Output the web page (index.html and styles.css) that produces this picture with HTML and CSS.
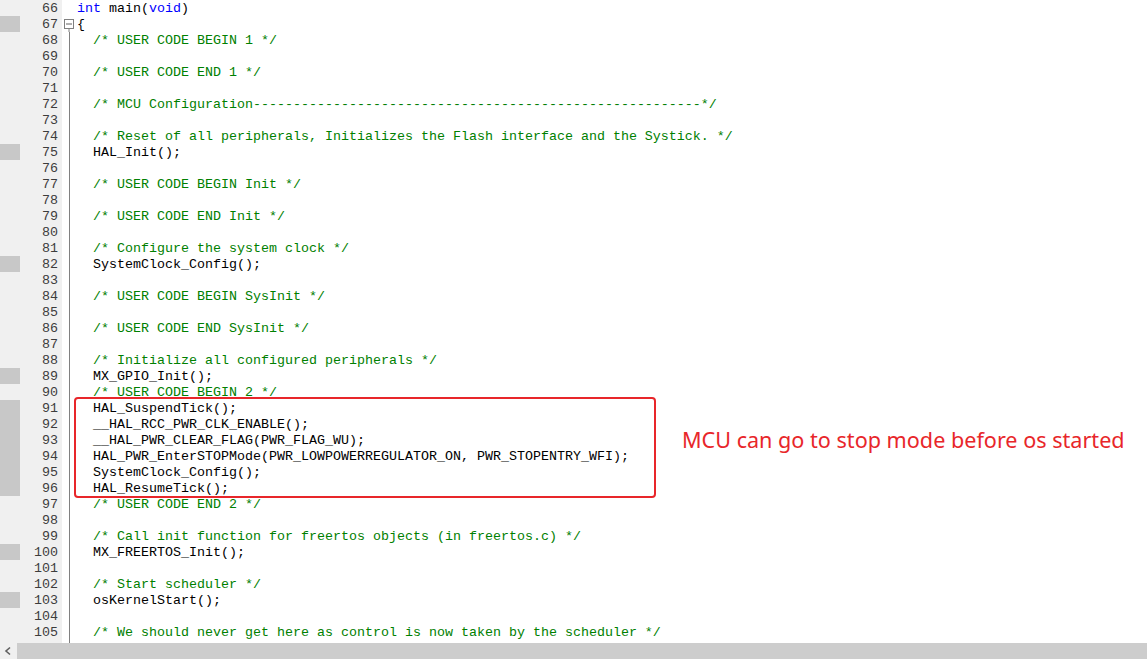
FILE: index.html
```html
<!DOCTYPE html>
<html>
<head>
<meta charset="utf-8">
<link rel="stylesheet" href="styles.css">
</head>
<body>
<div class="window">
  <div class="editor">
    <div class="line"><span class="mark"></span><span class="num">66</span><span class="fold"></span><span class="code"><span class="kw">int</span> main(<span class="kw">void</span>)</span></div>
    <div class="line"><span class="mark on"></span><span class="num">67</span><span class="fold box"><svg width="13" height="16" viewBox="0 0 13 16"><rect x="2.5" y="3.5" width="9" height="9" fill="#fff" stroke="#808080"/><line x1="4" y1="8" x2="10" y2="8" stroke="#606060"/><line x1="7" y1="13" x2="7" y2="16" stroke="#808080"/></svg></span><span class="code">{</span></div>
    <div class="line"><span class="mark"></span><span class="num">68</span><span class="fold vl"></span><span class="code">  <span class="cm">/* USER CODE BEGIN 1 */</span></span></div>
    <div class="line"><span class="mark"></span><span class="num">69</span><span class="fold vl"></span><span class="code"></span></div>
    <div class="line"><span class="mark"></span><span class="num">70</span><span class="fold vl"></span><span class="code">  <span class="cm">/* USER CODE END 1 */</span></span></div>
    <div class="line"><span class="mark"></span><span class="num">71</span><span class="fold vl"></span><span class="code"></span></div>
    <div class="line"><span class="mark"></span><span class="num">72</span><span class="fold vl"></span><span class="code">  <span class="cm">/* MCU Configuration--------------------------------------------------------*/</span></span></div>
    <div class="line"><span class="mark"></span><span class="num">73</span><span class="fold vl"></span><span class="code"></span></div>
    <div class="line"><span class="mark"></span><span class="num">74</span><span class="fold vl"></span><span class="code">  <span class="cm">/* Reset of all peripherals, Initializes the Flash interface and the Systick. */</span></span></div>
    <div class="line"><span class="mark on"></span><span class="num">75</span><span class="fold vl"></span><span class="code">  HAL_Init();</span></div>
    <div class="line"><span class="mark"></span><span class="num">76</span><span class="fold vl"></span><span class="code"></span></div>
    <div class="line"><span class="mark"></span><span class="num">77</span><span class="fold vl"></span><span class="code">  <span class="cm">/* USER CODE BEGIN Init */</span></span></div>
    <div class="line"><span class="mark"></span><span class="num">78</span><span class="fold vl"></span><span class="code"></span></div>
    <div class="line"><span class="mark"></span><span class="num">79</span><span class="fold vl"></span><span class="code">  <span class="cm">/* USER CODE END Init */</span></span></div>
    <div class="line"><span class="mark"></span><span class="num">80</span><span class="fold vl"></span><span class="code"></span></div>
    <div class="line"><span class="mark"></span><span class="num">81</span><span class="fold vl"></span><span class="code">  <span class="cm">/* Configure the system clock */</span></span></div>
    <div class="line"><span class="mark on"></span><span class="num">82</span><span class="fold vl"></span><span class="code">  SystemClock_Config();</span></div>
    <div class="line"><span class="mark"></span><span class="num">83</span><span class="fold vl"></span><span class="code"></span></div>
    <div class="line"><span class="mark"></span><span class="num">84</span><span class="fold vl"></span><span class="code">  <span class="cm">/* USER CODE BEGIN SysInit */</span></span></div>
    <div class="line"><span class="mark"></span><span class="num">85</span><span class="fold vl"></span><span class="code"></span></div>
    <div class="line"><span class="mark"></span><span class="num">86</span><span class="fold vl"></span><span class="code">  <span class="cm">/* USER CODE END SysInit */</span></span></div>
    <div class="line"><span class="mark"></span><span class="num">87</span><span class="fold vl"></span><span class="code"></span></div>
    <div class="line"><span class="mark"></span><span class="num">88</span><span class="fold vl"></span><span class="code">  <span class="cm">/* Initialize all configured peripherals */</span></span></div>
    <div class="line"><span class="mark on"></span><span class="num">89</span><span class="fold vl"></span><span class="code">  MX_GPIO_Init();</span></div>
    <div class="line"><span class="mark"></span><span class="num">90</span><span class="fold vl"></span><span class="code">  <span class="cm">/* USER CODE BEGIN 2 */</span></span></div>
    <div class="line"><span class="mark on"></span><span class="num">91</span><span class="fold vl"></span><span class="code">  HAL_SuspendTick();</span></div>
    <div class="line"><span class="mark on"></span><span class="num">92</span><span class="fold vl"></span><span class="code">  __HAL_RCC_PWR_CLK_ENABLE();</span></div>
    <div class="line"><span class="mark on"></span><span class="num">93</span><span class="fold vl"></span><span class="code">  __HAL_PWR_CLEAR_FLAG(PWR_FLAG_WU);</span></div>
    <div class="line"><span class="mark on"></span><span class="num">94</span><span class="fold vl"></span><span class="code">  HAL_PWR_EnterSTOPMode(PWR_LOWPOWERREGULATOR_ON, PWR_STOPENTRY_WFI);</span></div>
    <div class="line"><span class="mark on"></span><span class="num">95</span><span class="fold vl"></span><span class="code">  SystemClock_Config();</span></div>
    <div class="line"><span class="mark on"></span><span class="num">96</span><span class="fold vl"></span><span class="code">  HAL_ResumeTick();</span></div>
    <div class="line"><span class="mark"></span><span class="num">97</span><span class="fold vl"></span><span class="code">  <span class="cm">/* USER CODE END 2 */</span></span></div>
    <div class="line"><span class="mark"></span><span class="num">98</span><span class="fold vl"></span><span class="code"></span></div>
    <div class="line"><span class="mark"></span><span class="num">99</span><span class="fold vl"></span><span class="code">  <span class="cm">/* Call init function for freertos objects (in freertos.c) */</span></span></div>
    <div class="line"><span class="mark on"></span><span class="num">100</span><span class="fold vl"></span><span class="code">  MX_FREERTOS_Init();</span></div>
    <div class="line"><span class="mark"></span><span class="num">101</span><span class="fold vl"></span><span class="code"></span></div>
    <div class="line"><span class="mark"></span><span class="num">102</span><span class="fold vl"></span><span class="code">  <span class="cm">/* Start scheduler */</span></span></div>
    <div class="line"><span class="mark on"></span><span class="num">103</span><span class="fold vl"></span><span class="code">  osKernelStart();</span></div>
    <div class="line"><span class="mark"></span><span class="num">104</span><span class="fold vl"></span><span class="code"></span></div>
    <div class="line"><span class="mark"></span><span class="num">105</span><span class="fold vl"></span><span class="code">  <span class="cm">/* We should never get here as control is now taken by the scheduler */</span></span></div>
    <div class="line tail"><span class="mark"></span><span class="num"></span><span class="fold vl"></span><span class="code"></span></div>
    <div class="callout"></div>
    <div class="note">MCU can go to stop mode before os started</div>
  </div>
  <div class="hscroll">
    <span class="arrow"><svg width="16" height="16" viewBox="0 0 16 16"><polyline points="10,4.5 6,8 10,11.5" fill="none" stroke="#606060" stroke-width="1.6"/></svg></span>
    <div class="thumb"></div>
  </div>
</div>
</body>
</html>
```
FILE: styles.css
```css
html, body {
  margin: 0;
  padding: 0;
  background: #ffffff;
}
.window {
  width: 1147px;
  height: 660px;
  overflow: hidden;
  display: flex;
  flex-direction: column;
  background: #ffffff;
}
.editor {
  position: relative;
  height: 643px;
  overflow: hidden;
  font-family: "Liberation Mono", "Courier New", monospace;
  font-size: 13.33px;
  line-height: 16px;
  color: #000000;
}
.line {
  display: grid;
  grid-template-columns: 20px 42px 15px 1fr;
  grid-template-rows: 16px;
  height: 16px;
}
.line.tail {
  height: 3px;
  grid-template-rows: 3px;
}
.mark {
  background: #f0f0f0;
}
.mark.on {
  background: #c8c8c8;
}
.num {
  background: #f0f0f0;
  text-align: right;
  padding-right: 4px;
  padding-top: 1px;
  color: #3c3c3c;
}
.fold {
  display: block;
}
.fold svg {
  display: block;
}
.fold.vl {
  background: linear-gradient(to right, transparent 7px, #808080 7px, #808080 8px, transparent 8px);
}
.code {
  white-space: pre;
  padding-top: 1px;
}
.kw {
  color: #0000ff;
}
.cm {
  color: #008000;
}
.callout {
  position: absolute;
  left: 74px;
  top: 397px;
  width: 578px;
  height: 97px;
  border: 2px solid #e8262a;
  border-radius: 4px;
}
.note {
  position: absolute;
  left: 682px;
  top: 425px;
  font-family: "Noto Sans", "Open Sans", sans-serif;
  font-size: 21.6px;
  line-height: 29px;
  color: #e8262a;
  white-space: nowrap;
}
.hscroll {
  height: 16px;
  display: flex;
  background: #f0f0f0;
}
.arrow {
  width: 17px;
  height: 16px;
  display: block;
}
.arrow svg {
  display: block;
}
.thumb {
  flex: 1;
  background: #cdcdcd;
}
```
